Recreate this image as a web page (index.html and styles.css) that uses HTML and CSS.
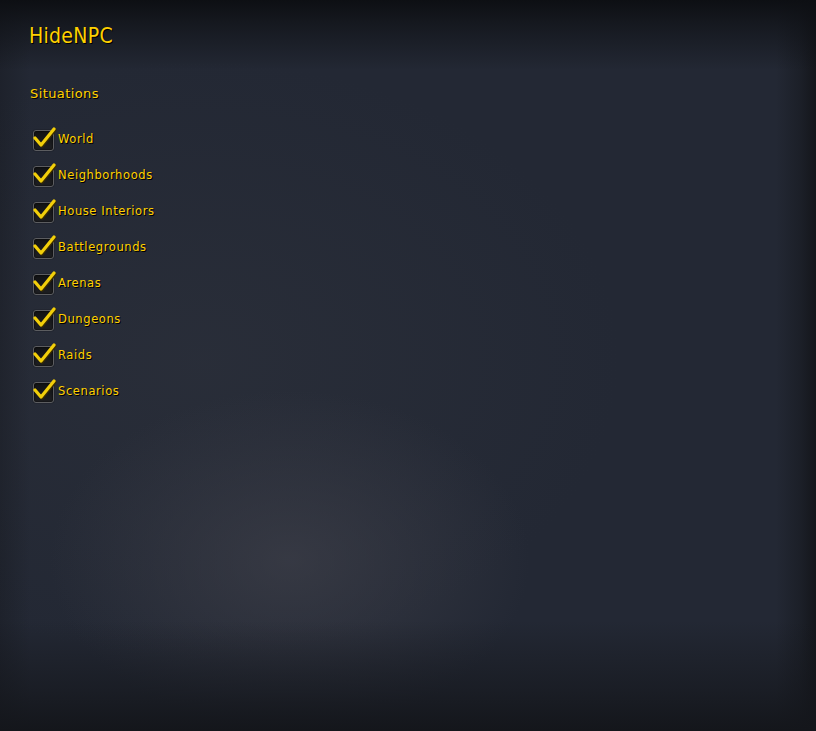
FILE: index.html
```html
<!DOCTYPE html>
<html lang="en">
<head>
<meta charset="utf-8">
<title>HideNPC</title>
<link rel="stylesheet" href="styles.css">
</head>
<body>
<main class="panel">
  <h1 class="title">HideNPC</h1>
  <h2 class="section">Situations</h2>
  <ul class="options">
    <li class="option"><span class="check"><svg viewBox="0 0 26 26"><path d="M4 13 L10 20 L23 4" /></svg></span><span class="label">World</span></li>
    <li class="option"><span class="check"><svg viewBox="0 0 26 26"><path d="M4 13 L10 20 L23 4" /></svg></span><span class="label">Neighborhoods</span></li>
    <li class="option"><span class="check"><svg viewBox="0 0 26 26"><path d="M4 13 L10 20 L23 4" /></svg></span><span class="label">House Interiors</span></li>
    <li class="option"><span class="check"><svg viewBox="0 0 26 26"><path d="M4 13 L10 20 L23 4" /></svg></span><span class="label">Battlegrounds</span></li>
    <li class="option"><span class="check"><svg viewBox="0 0 26 26"><path d="M4 13 L10 20 L23 4" /></svg></span><span class="label">Arenas</span></li>
    <li class="option"><span class="check"><svg viewBox="0 0 26 26"><path d="M4 13 L10 20 L23 4" /></svg></span><span class="label">Dungeons</span></li>
    <li class="option"><span class="check"><svg viewBox="0 0 26 26"><path d="M4 13 L10 20 L23 4" /></svg></span><span class="label">Raids</span></li>
    <li class="option"><span class="check"><svg viewBox="0 0 26 26"><path d="M4 13 L10 20 L23 4" /></svg></span><span class="label">Scenarios</span></li>
  </ul>
</main>
</body>
</html>
```

FILE: styles.css
```css
html, body {
  margin: 0;
  height: 100%;
}

body {
  background-color: #232834;
  background-image:
    linear-gradient(to bottom, #0d0f13 0px, rgba(13,15,19,0.6) 25px, rgba(13,15,19,0) 70px),
    linear-gradient(to top, #14161b 0px, rgba(20,22,27,0.6) 40px, rgba(20,22,27,0) 110px),
    linear-gradient(to left, #14161b 0px, rgba(20,22,27,0.5) 15px, rgba(20,22,27,0) 40px),
    linear-gradient(to right, rgba(20,22,27,0.35) 0px, rgba(20,22,27,0) 30px),
    radial-gradient(ellipse 240px 170px at 290px 560px, rgba(60,62,72,0.75), rgba(60,62,72,0) 100%),
    radial-gradient(ellipse 420px 300px at 200px 360px, rgba(48,52,62,0.45), rgba(48,52,62,0) 100%);
  font-family: "DejaVu Sans", "Noto Sans", sans-serif;
  overflow: hidden;
}

.panel {
  padding: 23px 0 0 29px;
}

.title {
  margin: 0;
  font-family: "DejaVu Sans Condensed", "DejaVu Sans", sans-serif;
  font-weight: normal;
  font-size: 21px;
  line-height: 26px;
  letter-spacing: 0.3px;
  color: #ffd100;
  text-shadow: 1px 1px 0 #000;
}

.section {
  margin: 35px 0 0 1px;
  font-weight: normal;
  font-size: 13px;
  line-height: 20px;
  color: #ffd100;
  letter-spacing: 0.4px;
  text-shadow: 1px 1px 0 #000;
}

.options {
  list-style: none;
  margin: 23px 0 0 3px;
  padding: 0;
  display: flex;
  flex-direction: column;
  gap: 12px;
}

.option {
  display: flex;
  align-items: center;
  height: 24px;
}

.check {
  position: relative;
  width: 19px;
  height: 19px;
  margin: 2px 4px 0 1px;
  border: 1px solid #5c5d60;
  border-radius: 3px;
  background: linear-gradient(#111214, #1e1f22);
  box-shadow: inset 0 0 2px #000, 0 0 1px #000;
}

.check svg {
  position: absolute;
  left: -3px;
  top: -6px;
  width: 26px;
  height: 26px;
  overflow: visible;
}

.check path {
  fill: none;
  stroke: #f2cf0a;
  stroke-width: 3.2;
  stroke-linecap: round;
  stroke-linejoin: round;
  filter: drop-shadow(1px 1px 0 #3a2c00);
}

.label {
  font-size: 11.5px;
  letter-spacing: 0.6px;
  color: #ffd100;
  text-shadow: 1px 1px 0 #000;
}
```
